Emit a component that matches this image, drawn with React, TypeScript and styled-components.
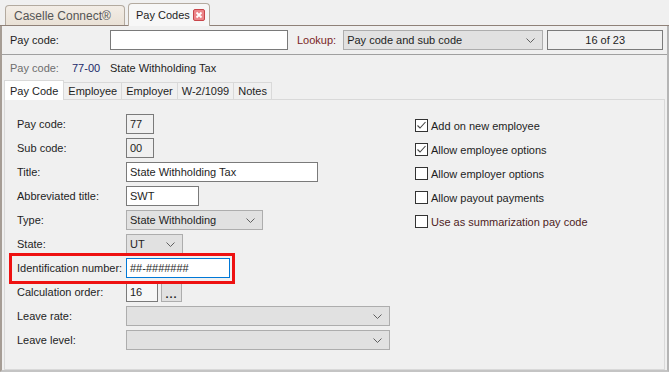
import React from "react";
import styled, { createGlobalStyle } from "styled-components";

const GlobalStyle = createGlobalStyle`
  html, body {
    margin: 0;
    padding: 0;
    background: #f0f0f0;
  }
  body {
    font-family: "Liberation Sans", Arial, sans-serif;
    font-size: 11px;
    color: #1e1e1e;
  }
`;

const Page = styled.div`
  width: 669px;
  height: 372px;
  display: flex;
  flex-direction: column;
  background: #f0f0f0;
  overflow: hidden;
`;

const DocTabs = styled.div`
  height: 25px;
  display: flex;
  align-items: flex-end;
  padding-left: 5px;
  gap: 3px;
  border-bottom: 1px solid #8f8178;
`;

const DocTab = styled.div<{ $active?: boolean }>`
  height: ${({ $active }) => ($active ? "23px" : "20px")};
  box-sizing: border-box;
  display: flex;
  align-items: center;
  justify-content: space-between;
  white-space: nowrap;
  padding: 0 3px 0 ${({ $active }) => ($active ? "7px" : "8px")};
  width: ${({ $active }) => ($active ? "82px" : "120px")};
  border: 1px solid #b3aa9f;
  border-bottom: none;
  border-radius: 4px 4px 0 0;
  background: ${({ $active }) =>
    $active ? "#f7f7f7" : "linear-gradient(#f3ede6, #e9e1d6)"};
  color: ${({ $active }) => ($active ? "#1e1e1e" : "#555")};
  font-size: ${({ $active }) => ($active ? "11px" : "12px")};
  margin-bottom: ${({ $active }) => ($active ? "-1px" : "0")};
`;

const CloseBox = styled.span`
  width: 10px;
  height: 10px;
  flex-shrink: 0;
  margin-right: 1px;
  border: 1px solid #c8454a;
  border-radius: 2px;
  background: #ec8589;
  display: flex;
  align-items: center;
  justify-content: center;
`;

const Frame = styled.div`
  flex: 1;
  display: flex;
  flex-direction: column;
  border-left: 2px solid #a69d95;
  border-right: 2px solid #b5b5b5;
  border-bottom: 2px solid #c4c4c4;
`;

const SearchBar = styled.div`
  height: 28px;
  display: flex;
  align-items: center;
  padding: 0 0 0 8px;
  border-bottom: 1px solid #a0a0a0;
`;

const Label = styled.span<{ $width?: number; $tone?: "red" | "gray" | "blue" | "brown" }>`
  display: inline-block;
  width: ${({ $width }) => ($width ? `${$width}px` : "auto")};
  flex-shrink: 0;
  white-space: nowrap;
  color: ${({ $tone }) =>
    $tone === "red"
      ? "#7a2626"
      : $tone === "brown"
      ? "#4e1c1c"
      : $tone === "gray"
      ? "#6e6e6e"
      : $tone === "blue"
      ? "#1a2a6a"
      : "#1e1e1e"};
`;

const TextBox = styled.div<{ $width: number; $bg?: string; $border?: string }>`
  width: ${({ $width }) => $width}px;
  height: 20px;
  box-sizing: border-box;
  flex-shrink: 0;
  background: ${({ $bg }) => $bg || "#fff"};
  border: 1px solid ${({ $border }) => $border || "#7a7a7a"};
  display: flex;
  align-items: center;
  padding-left: 3px;
  white-space: nowrap;
  color: #1e1e1e;
`;

const Counter = styled(TextBox)`
  justify-content: center;
  padding-left: 0;
  margin-left: 4px;
  background: #f0f0f0;
`;

const SelectBox = styled.div<{ $width: number }>`
  width: ${({ $width }) => $width}px;
  height: 20px;
  box-sizing: border-box;
  flex-shrink: 0;
  background: #e1e1e1;
  border: 1px solid #adadad;
  display: flex;
  align-items: center;
  justify-content: space-between;
  padding: 0 7px 0 3px;
  white-space: nowrap;
`;

const Chevron = () => (
  <svg width="9" height="5" viewBox="0 0 9 5">
    <path d="M0.5 0.5 L4.5 4.5 L8.5 0.5" fill="none" stroke="#606060" strokeWidth="1" />
  </svg>
);

const Select: React.FC<{ width: number; value?: string }> = ({ width, value }) => (
  <SelectBox $width={width}>
    <span>{value}</span>
    <Chevron />
  </SelectBox>
);

const LookupLabel = styled(Label)`
  margin: 0 7px 0 9px;
`;

const InfoLine = styled.div`
  height: 25px;
  display: flex;
  align-items: center;
  padding-left: 8px;
`;

const SubTabs = styled.div`
  display: flex;
  align-items: flex-end;
  padding-left: 2px;
  height: 20px;
`;

const SubTab = styled.div<{ $active?: boolean }>`
  height: ${({ $active }) => ($active ? "20px" : "18px")};
  box-sizing: border-box;
  padding: 0 ${({ $active }) => ($active ? "5px" : "4px")};
  display: flex;
  align-items: center;
  background: ${({ $active }) => ($active ? "#fff" : "#f0f0f0")};
  border: 1px solid #d9d9d9;
  border-bottom: ${({ $active }) => ($active ? "none" : "1px solid #d9d9d9")};
  margin-right: -1px;
  position: relative;
  z-index: ${({ $active }) => ($active ? 1 : 0)};
`;

const Panel = styled.div`
  flex: 1;
  margin: -1px 2px 0 2px;
  border: 1px solid #d9d9d9;
  display: flex;
  padding: 14px 0 0 12px;
`;

const Form = styled.div`
  width: 398px;
  display: flex;
  flex-direction: column;
  gap: 4px;
`;

const Row = styled.div`
  height: 20px;
  display: flex;
  align-items: center;
  gap: 3px;
`;

const Highlight = styled(Row)`
  position: relative;
  &::after {
    content: "";
    position: absolute;
    left: -8px;
    top: -5px;
    width: 226px;
    height: 31px;
    box-sizing: border-box;
    border: 3px solid #ee1111;
    pointer-events: none;
  }
`;

const Ellipsis = styled.div`
  width: 21px;
  height: 19px;
  box-sizing: border-box;
  background: #e1e1e1;
  border: 1px solid #adadad;
  display: flex;
  align-items: flex-end;
  justify-content: center;
  padding-bottom: 3px;
  font-weight: bold;
  letter-spacing: 1px;
  line-height: 8px;
`;

const Options = styled.div`
  display: flex;
  flex-direction: column;
  gap: 11px;
  padding-top: 5px;
`;

const Option = styled.div`
  display: flex;
  align-items: center;
  gap: 3px;
  height: 13px;
`;

const Box = styled.span`
  width: 13px;
  height: 13px;
  box-sizing: border-box;
  border: 1px solid #333;
  background: #fff;
  display: flex;
  align-items: center;
  justify-content: center;
`;

const Check: React.FC<{ checked?: boolean; label: string; brown?: boolean }> = ({ checked, label, brown }) => (
  <Option>
    <Box>
      {checked && (
        <svg width="11" height="11" viewBox="0 0 11 11">
          <path d="M1.5 5.5 L4 8 L9.5 2" fill="none" stroke="#444" strokeWidth="1.1" />
        </svg>
      )}
    </Box>
    <Label $tone={brown ? "brown" : undefined}>{label}</Label>
  </Option>
);

const LABEL_W = 106;

export default function App() {
  return (
    <Page>
      <GlobalStyle />
      <DocTabs>
        <DocTab>Caselle Connect®</DocTab>
        <DocTab $active>
          Pay Codes
          <CloseBox>
            <svg width="8" height="8" viewBox="0 0 8 8">
              <path d="M1.5 1.5 L6.5 6.5 M6.5 1.5 L1.5 6.5" stroke="#fff" strokeWidth="1.8" />
            </svg>
          </CloseBox>
        </DocTab>
      </DocTabs>
      <Frame>
        <SearchBar>
          <Label $width={100}>Pay code:</Label>
          <TextBox $width={178} />
          <LookupLabel $tone="red">Lookup:</LookupLabel>
          <Select width={200} value="Pay code and sub code" />
          <Counter $width={116}>16 of 23</Counter>
        </SearchBar>
        <InfoLine>
          <Label $tone="gray" $width={62}>Pay code:</Label>
          <Label $tone="blue" $width={38}>77-00</Label>
          <Label>State Withholding Tax</Label>
        </InfoLine>
        <SubTabs>
          <SubTab $active>Pay Code</SubTab>
          <SubTab>Employee</SubTab>
          <SubTab>Employer</SubTab>
          <SubTab>W-2/1099</SubTab>
          <SubTab>Notes</SubTab>
        </SubTabs>
        <Panel>
          <Form>
            <Row>
              <Label $width={LABEL_W}>Pay code:</Label>
              <TextBox $width={28} $bg="#f0f0f0">77</TextBox>
            </Row>
            <Row>
              <Label $width={LABEL_W}>Sub code:</Label>
              <TextBox $width={28} $bg="#f0f0f0">00</TextBox>
            </Row>
            <Row>
              <Label $width={LABEL_W}>Title:</Label>
              <TextBox $width={192}>State Withholding Tax</TextBox>
            </Row>
            <Row>
              <Label $width={LABEL_W}>Abbreviated title:</Label>
              <TextBox $width={73}>SWT</TextBox>
            </Row>
            <Row>
              <Label $width={LABEL_W}>Type:</Label>
              <Select width={137} value="State Withholding" />
            </Row>
            <Row>
              <Label $width={LABEL_W}>State:</Label>
              <Select width={57} value="UT" />
            </Row>
            <Highlight>
              <Label $width={LABEL_W}>Identification number:</Label>
              <TextBox $width={104} $border="#0078d7">##-#######</TextBox>
            </Highlight>
            <Row>
              <Label $width={LABEL_W}>Calculation order:</Label>
              <TextBox $width={32} $bg="#f7f7f7">16</TextBox>
              <Ellipsis>...</Ellipsis>
            </Row>
            <Row>
              <Label $width={LABEL_W}>Leave rate:</Label>
              <Select width={264} />
            </Row>
            <Row>
              <Label $width={LABEL_W}>Leave level:</Label>
              <Select width={264} />
            </Row>
          </Form>
          <Options>
            <Check checked label="Add on new employee" />
            <Check checked label="Allow employee options" />
            <Check label="Allow employer options" />
            <Check label="Allow payout payments" />
            <Check brown label="Use as summarization pay code" />
          </Options>
        </Panel>
      </Frame>
    </Page>
  );
}
